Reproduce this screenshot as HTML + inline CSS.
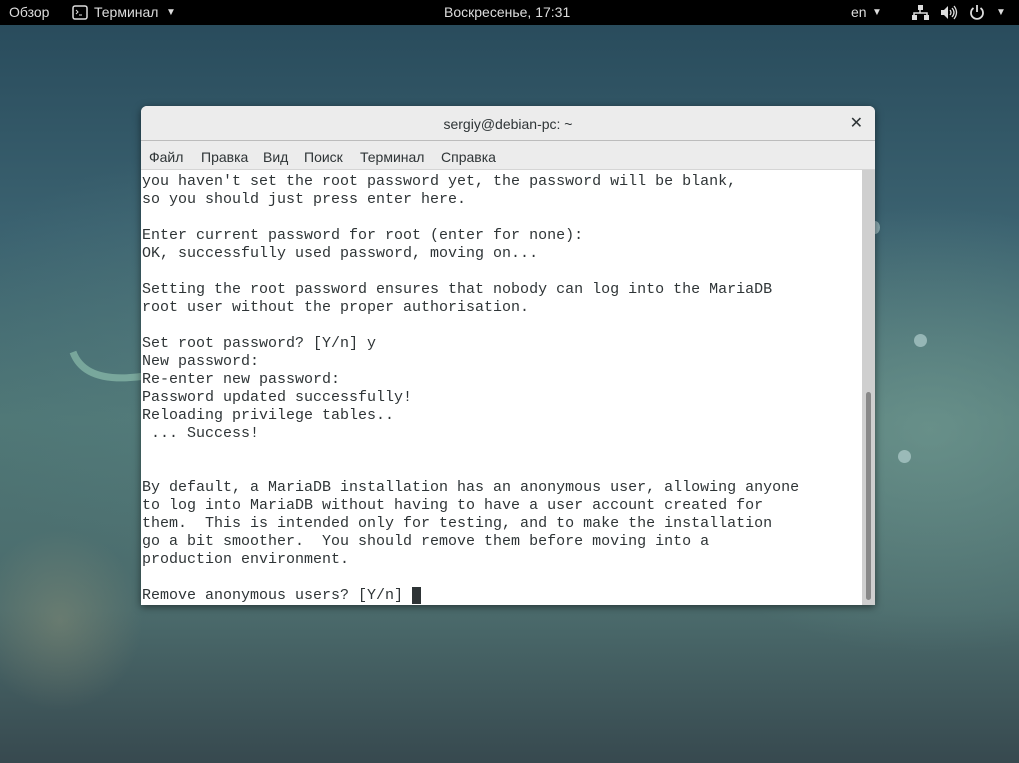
<!DOCTYPE html>
<html><head><meta charset="utf-8"><style>
*{margin:0;padding:0;box-sizing:border-box}
body{width:1019px;height:763px;overflow:hidden;position:relative;font-family:"Liberation Sans","DejaVu Sans",sans-serif;
background:
radial-gradient(ellipse 110px 120px at 60px 620px,rgba(150,150,120,.4),transparent 75%),
radial-gradient(ellipse 420px 320px at 930px 430px,rgba(120,160,150,.6),transparent 70%),
radial-gradient(ellipse 500px 300px at 300px 360px,rgba(90,130,130,.5),transparent 75%),
linear-gradient(180deg,#27495a 0%,#3b6270 30%,#4f7776 55%,#4b6b6c 80%,#37494f 100%);}
#top{position:absolute;left:0;top:0;width:1019px;height:25px;background:#000;color:#ddd;font-size:14px}
#top span{position:absolute;top:4px}
.win{position:absolute;left:141px;top:106px;width:734px;height:499px;background:#fff;border-radius:6px 6px 0 0;box-shadow:0 2px 8px rgba(0,0,0,.5);overflow:hidden}
.title{height:35px;background:#ececec;border-bottom:1px solid #bcbcbc;text-align:center;font-size:14px;color:#2e3436;line-height:36px}
.menu{height:29px;background:#ececec;border-bottom:1px solid #d5d5d5;font-size:14px;color:#2e3436}
.menu span{position:absolute;top:43px}
pre{position:absolute;left:1px;top:67px;font-family:"Liberation Mono","DejaVu Sans Mono",monospace;font-size:15px;line-height:18px;color:#2e3436}
.sb{position:absolute;right:0;top:64px;width:13px;height:435px;background:#cfcfcf}
.th{position:absolute;left:4px;top:222px;width:5px;height:208px;background:#888;border-radius:3px}
.dot{position:absolute;border-radius:50%;background:rgba(200,225,225,.55)}
</style></head><body>
<div class="dot" style="left:914px;top:334px;width:13px;height:13px"></div>
<div class="dot" style="left:898px;top:450px;width:13px;height:13px"></div>
<div class="dot" style="left:870px;top:221px;width:10px;height:13px"></div>
<svg style="position:absolute;left:60px;top:340px" width="90" height="60"><path d="M13 12 Q25 45 85 36" stroke="rgba(150,200,180,.6)" stroke-width="7" fill="none"/></svg>
<div id="top">
<span style="left:9px">Обзор</span>
<svg style="position:absolute;left:72px;top:5px" width="16" height="15"><rect x="1" y="1" width="14" height="13" rx="2" fill="none" stroke="#ddd" stroke-width="1.5"/><path d="M4 5l2 2-2 2M7 10h3" stroke="#ddd" stroke-width="1" fill="none"/></svg>
<span style="left:94px">Терминал</span><span style="left:166px;font-size:10px;top:7px">▼</span>
<span style="left:444px">Воскресенье, 17:31</span>
<span style="left:851px">en</span><span style="left:872px;font-size:10px;top:7px">▼</span>
<svg style="position:absolute;left:912px;top:5px" width="17" height="16" fill="#ddd"><rect x="6" y="0" width="5" height="5"/><rect x="0" y="10" width="5" height="5"/><rect x="12" y="10" width="5" height="5"/><path d="M8 5v3M2 10V8h13v2" stroke="#ddd" fill="none" stroke-width="1.5"/></svg>
<svg style="position:absolute;left:941px;top:5px" width="17" height="15" fill="#ddd"><path d="M0 5h3l4-4v13l-4-4H0z"/><path d="M9 5q2 2.5 0 5M11 3q4 4.5 0 9M13 1q5 6.5 0 13" stroke="#ddd" fill="none" stroke-width="1.3"/></svg>
<svg style="position:absolute;left:969px;top:4px" width="16" height="16"><path d="M4.5 4a6 6 0 1 0 7 0" stroke="#ddd" stroke-width="1.8" fill="none"/><path d="M8 1v7" stroke="#ddd" stroke-width="1.8"/></svg>
<span style="left:996px;font-size:10px;top:7px">▼</span>
</div>
<div class="win">
<div class="title">sergiy@debian-pc: ~<span style="position:absolute;right:12px;top:0;font-size:16px;font-weight:bold">✕</span></div>
<div class="menu"><span style="left:8px">Файл</span><span style="left:60px">Правка</span><span style="left:122px">Вид</span><span style="left:163px">Поиск</span><span style="left:219px">Терминал</span><span style="left:300px">Справка</span></div>
<pre>you haven't set the root password yet, the password will be blank,
so you should just press enter here.

Enter current password for root (enter for none):
OK, successfully used password, moving on...

Setting the root password ensures that nobody can log into the MariaDB
root user without the proper authorisation.

Set root password? [Y/n] y
New password:
Re-enter new password:
Password updated successfully!
Reloading privilege tables..
 ... Success!


By default, a MariaDB installation has an anonymous user, allowing anyone
to log into MariaDB without having to have a user account created for
them.  This is intended only for testing, and to make the installation
go a bit smoother.  You should remove them before moving into a
production environment.

Remove anonymous users? [Y/n] <span style="background:#2e3436">&nbsp;</span></pre>
<div class="sb"><div class="th"></div></div>
</div>
</body></html>
